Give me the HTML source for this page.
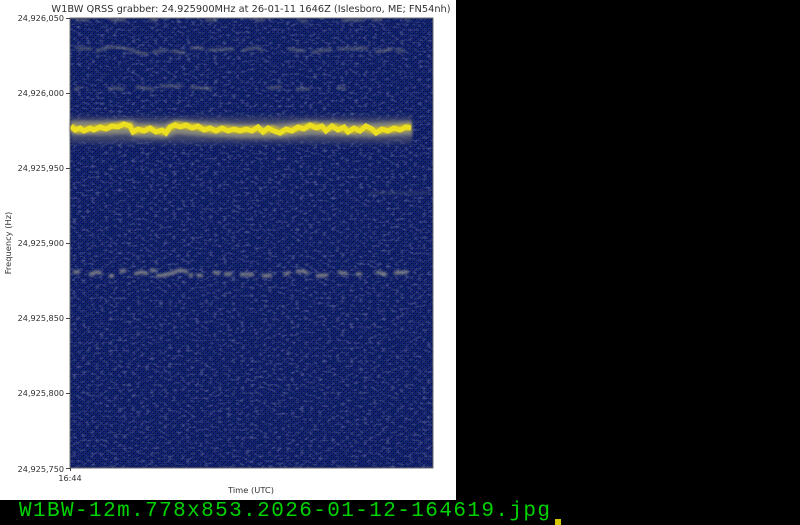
<!DOCTYPE html>
<html><head><meta charset="utf-8"><style>
html,body{margin:0;padding:0;background:#000;width:800px;height:525px;overflow:hidden}
svg{position:absolute;left:0;top:0;display:block}
.t{font-family:"DejaVu Sans",sans-serif;fill:#303030}
.y{font-size:8.1px;text-anchor:end}
</style></head><body>
<svg width="800" height="525" viewBox="0 0 800 525" xmlns="http://www.w3.org/2000/svg">
<defs>
<pattern id="d" width="4" height="4" patternUnits="userSpaceOnUse">
<rect width="4" height="4" fill="#0e1a78"/>
<rect x="0" y="0" width="1" height="1" fill="#0b3a44"/><rect x="2" y="0" width="1" height="1" fill="#141e60"/>
<rect x="1" y="1" width="1" height="1" fill="#0a1244"/><rect x="3" y="1" width="1" height="1" fill="#161f62"/>
<rect x="2" y="2" width="1" height="1" fill="#0b3a44"/><rect x="0" y="2" width="1" height="1" fill="#141e60"/>
<rect x="3" y="3" width="1" height="1" fill="#0a1244"/><rect x="1" y="3" width="1" height="1" fill="#161f62"/>
</pattern>
<filter id="n" filterUnits="userSpaceOnUse" x="70" y="18" width="363" height="450">
<feTurbulence type="fractalNoise" baseFrequency="0.22 0.38" numOctaves="2" seed="7"/>
<feColorMatrix type="matrix" values="0 0 0 0 .42  0 0 0 0 .42  0 0 0 0 .6  3 0 0 0 -1.5"/>
</filter>
<filter id="b1" filterUnits="userSpaceOnUse" x="0" y="0" width="800" height="525"><feGaussianBlur stdDeviation=".8"/></filter>
<filter id="b2" filterUnits="userSpaceOnUse" x="0" y="0" width="800" height="525"><feGaussianBlur stdDeviation="1.2"/></filter>
<filter id="b3" filterUnits="userSpaceOnUse" x="0" y="0" width="800" height="525"><feGaussianBlur stdDeviation="1.5 1.6"/></filter>
<filter id="b6" filterUnits="userSpaceOnUse" x="0" y="0" width="800" height="525"><feGaussianBlur stdDeviation="1 3"/></filter>
</defs>
<rect x="0" y="0" width="456" height="500" fill="#fff"/>
<rect x="70" y="18" width="363" height="450" fill="url(#d)"/>
<rect x="70" y="18" width="363" height="450" filter="url(#n)" opacity=".36"/>
<g fill="none" stroke-linecap="butt">
<g stroke="#9a9888" filter="url(#b2)" opacity=".5" stroke-width="2.6">
<path d="M75 20h14M110 20h16M150 20h8M205 20h12M255 20h10M300 21h8M342 20h22M372 20h10M405 20h4"/>
<path d="M76 48l16 1M96 52q8-5 18-5t20 4 14 2M152 52l16-2M172 51l14 2M190 48q8-1 14 1M208 50l26-1M242 51q8-3 14-3t6 4M288 49l18 2M312 52l20-3M338 49l30-1M375 52l18-3M396 50l9 1"/>
<path d="M74 90l6-3M108 90q8-4 16 0M136 87l18 2M160 86l22 0M190 87l22 2M268 88l14-1M296 89l14 0M338 88l8 0"/>
<path d="M370 193h60" opacity=".4"/>
</g>
<g stroke="#a09e90" stroke-width="3.4" filter="url(#b2)" opacity=".75">
<path d="M73 272h7M89 275l7-3 6 1M109 276h5M120 272l6-2M134 274l8-2 6 2M150 271l6-1M156 276l10-1 6-2 8-3 8 2M189 276l4-2M197 275l6 1M213 272l7 2M224 274l8 0M240 275l6-1 8 1M262 276l10-1M284 275l6-3M296 272l8-1 4 3M316 276l12-1M338 272l10 2M356 274l6 0M376 272l5 1 6 2M394 273l14-1"/>
</g>
<path stroke="#50536f" stroke-width="25" filter="url(#b6)" opacity=".75" d="M71 130H412"/>
<path stroke="#85857a" stroke-width="14" filter="url(#b3)" d="M71 128L100 128 130 127 136 130 165 131 176 127 200 129 240 131 280 131 310 128 340 129 370 130 412 128"/>
<path stroke="#b8ab3a" stroke-width="7.500" filter="url(#b1)" d="M71 127L78 130 88 129 98 128 108 127 115 126 122 125 130 126 134 131 142 130 150 129 158 131 165 132 170 128 176 125 185 126 195 127 205 129 215 130 225 129 235 130 245 130 258 129 265 131 272 129 280 132 288 130 295 129 305 127 315 126 325 129 335 127 345 130 355 130 365 128 375 131 385 130 395 129 411 127"/>
<path stroke="#ecdf22" stroke-width="5" stroke-linejoin="miter" d="M71 126L75 130 80 128 84 131 90 128 94 130 100 127 106 129 112 126 118 127 124 124 130 126 133 132 138 129 144 131 150 128 156 132 162 130 166 133 170 127 175 125 180 127 186 125 192 128 198 126 204 130 210 128 216 131 222 128 228 131 234 129 240 131 246 129 252 131 258 127 263 132 268 128 274 131 280 133 286 129 292 131 298 127 304 129 310 125 316 128 322 126 326 131 332 126 338 130 344 127 348 132 354 128 360 131 366 126 372 129 376 133 382 129 388 131 394 128 400 130 406 127 411 128"/>
</g>
<rect x="70" y="18" width="363" height="450" fill="none" stroke="#6d6d6d" stroke-width="1"/>
<g stroke="#444" stroke-width="1"><path d="M66 18.500h4M66 93.500h4M66 168.500h4M66 243.500h4M66 318.500h4M66 393.500h4M66 468.500h4M70.500 468v3"/></g>
<text class="t" x="251" y="12" font-size="9.8" text-anchor="middle">W1BW QRSS grabber: 24.925900MHz at 26-01-11 1646Z (Islesboro, ME; FN54nh)</text>
<text class="t y" x="64" y="21">24,926,050</text>
<text class="t y" x="64" y="96">24,926,000</text>
<text class="t y" x="64" y="171">24,925,950</text>
<text class="t y" x="64" y="246">24,925,900</text>
<text class="t y" x="64" y="321">24,925,850</text>
<text class="t y" x="64" y="396">24,925,800</text>
<text class="t y" x="64" y="472">24,925,750</text>
<text class="t" x="70" y="481" font-size="8.1" text-anchor="middle">16:44</text>
<text class="t" x="251" y="493" font-size="8.3" text-anchor="middle">Time (UTC)</text>
<text class="t" transform="translate(11 243) rotate(-90)" font-size="8.3" text-anchor="middle">Frequency (Hz)</text>
<text x="19" y="516" font-family="'Liberation Mono','DejaVu Sans Mono',monospace" font-size="21" textLength="531" lengthAdjust="spacing" fill="#00d400">W1BW-12m.778x853.2026-01-12-164619.jpg</text>
<rect x="555" y="519" width="6" height="6" fill="#d4c800"/>
</svg>
</body></html>
